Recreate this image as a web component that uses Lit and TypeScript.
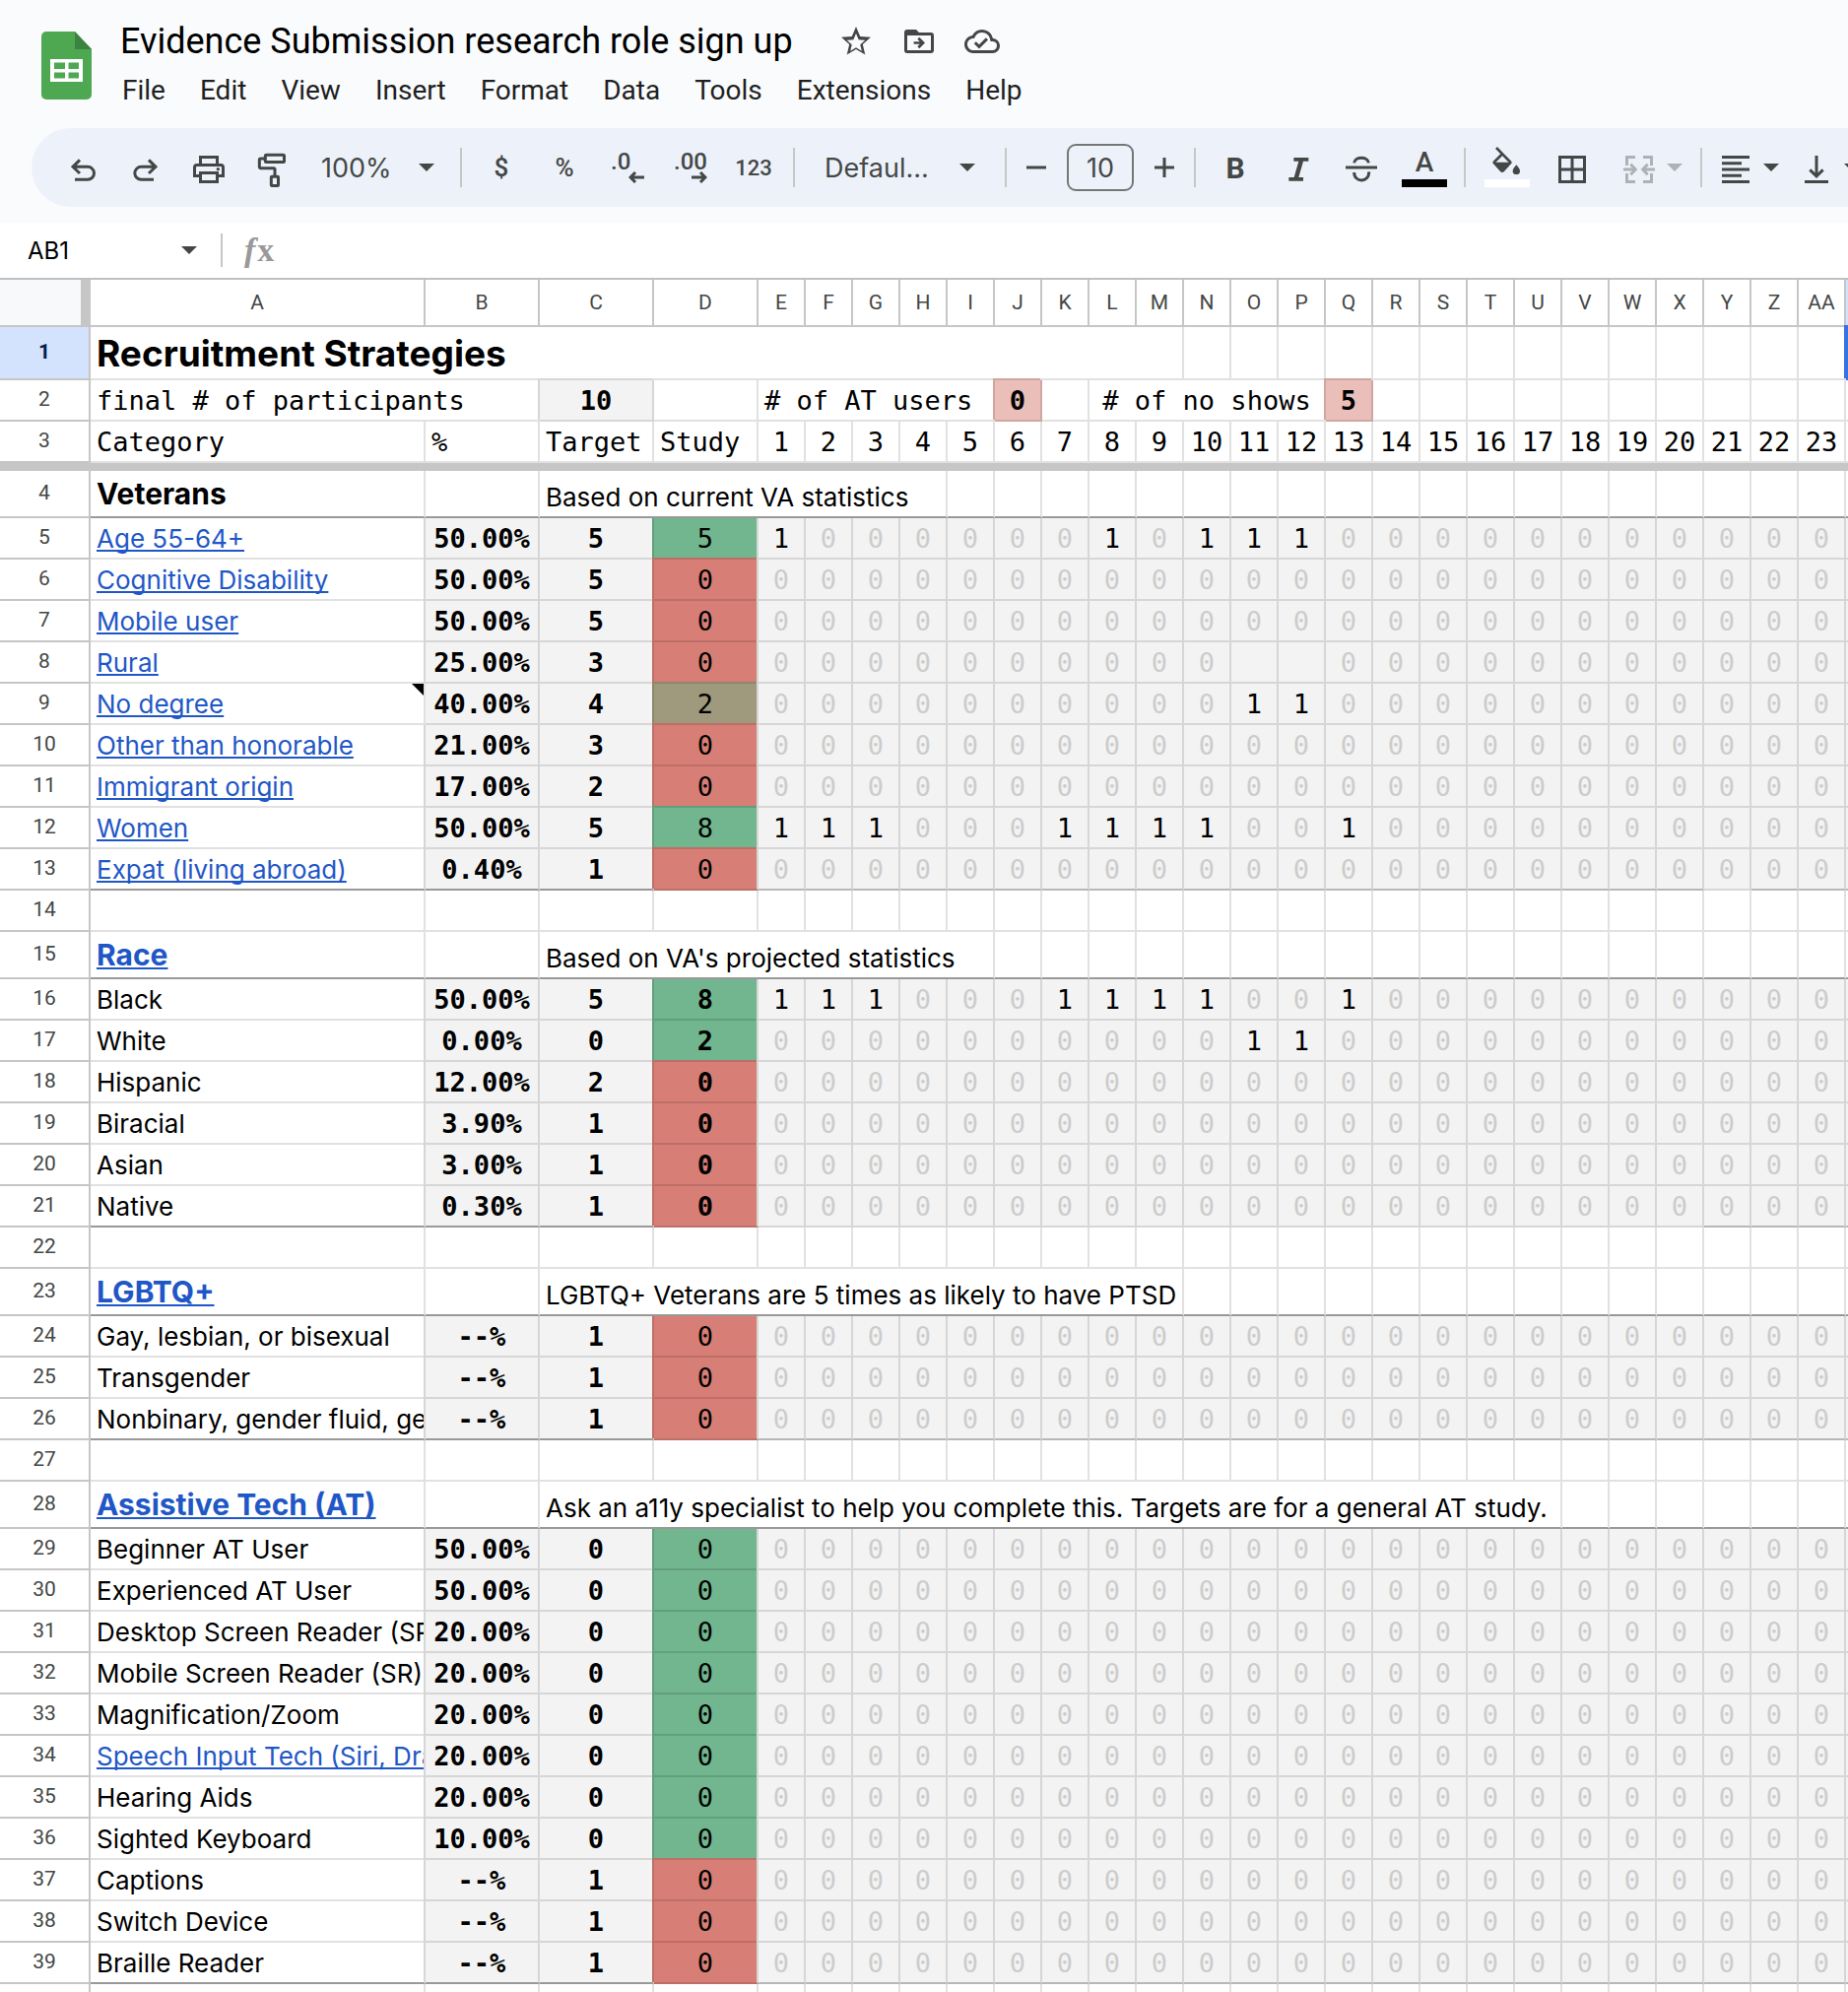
import { LitElement, html, css, svg, nothing, TemplateResult } from "lit";
import { customElement, property } from "lit/decorators.js";
import { classMap } from "lit/directives/class-map.js";

type Tone = "good" | "bad" | "mid";

interface Entry {
  label: string;
  link?: boolean;
  note?: boolean;
  share: string;
  target: number;
  study: number;
  tone: Tone;
  ones?: number[];
  blanks?: number[];
}

interface Group {
  title: string;
  link?: boolean;
  caption: string;
  captionSpan: number;
  boldStudy?: boolean;
  /** Participant numbers whose last cell carries the closing rule. */
  closed: (n: number) => boolean;
  entries: Entry[];
}

const PARTICIPANTS = Array.from({ length: 23 }, (_, i) => i + 1);
const COLUMNS = ["A", "B", "C", "D", ..."EFGHIJKLMNOPQRSTUVWXYZ".split(""), "AA", "AB"];

const GROUPS: Group[] = [
  {
    title: "Veterans",
    caption: "Based on current VA statistics",
    captionSpan: 6,
    closed: (n) => n !== 21,
    entries: [
      { label: "Age 55-64+", link: true, share: "50.00%", target: 5, study: 5, tone: "good", ones: [1, 8, 10, 11, 12] },
      { label: "Cognitive Disability", link: true, share: "50.00%", target: 5, study: 0, tone: "bad" },
      { label: "Mobile user", link: true, share: "50.00%", target: 5, study: 0, tone: "bad" },
      { label: "Rural", link: true, share: "25.00%", target: 3, study: 0, tone: "bad", blanks: [11, 12] },
      { label: "No degree", link: true, note: true, share: "40.00%", target: 4, study: 2, tone: "mid", ones: [11, 12] },
      { label: "Other than honorable", link: true, share: "21.00%", target: 3, study: 0, tone: "bad" },
      { label: "Immigrant origin", link: true, share: "17.00%", target: 2, study: 0, tone: "bad" },
      { label: "Women", link: true, share: "50.00%", target: 5, study: 8, tone: "good", ones: [1, 2, 3, 7, 8, 9, 10, 13] },
      { label: "Expat (living abroad)", link: true, share: "0.40%", target: 1, study: 0, tone: "bad" },
    ],
  },
  {
    title: "Race",
    link: true,
    caption: "Based on VA's projected statistics",
    captionSpan: 7,
    boldStudy: true,
    closed: (n) => n >= 21,
    entries: [
      { label: "Black", share: "50.00%", target: 5, study: 8, tone: "good", ones: [1, 2, 3, 7, 8, 9, 10, 13] },
      { label: "White", share: "0.00%", target: 0, study: 2, tone: "good", ones: [11, 12] },
      { label: "Hispanic", share: "12.00%", target: 2, study: 0, tone: "bad" },
      { label: "Biracial", share: "3.90%", target: 1, study: 0, tone: "bad" },
      { label: "Asian", share: "3.00%", target: 1, study: 0, tone: "bad" },
      { label: "Native", share: "0.30%", target: 1, study: 0, tone: "bad" },
    ],
  },
  {
    title: "LGBTQ+",
    link: true,
    caption: "LGBTQ+ Veterans are 5 times as likely to have PTSD",
    captionSpan: 11,
    closed: () => true,
    entries: [
      { label: "Gay, lesbian, or bisexual", share: "--%", target: 1, study: 0, tone: "bad" },
      { label: "Transgender", share: "--%", target: 1, study: 0, tone: "bad" },
      { label: "Nonbinary, gender fluid, ge", share: "--%", target: 1, study: 0, tone: "bad" },
    ],
  },
  {
    title: "Assistive Tech (AT)",
    link: true,
    caption: "Ask an a11y specialist to help you complete this. Targets are for a general AT study.",
    captionSpan: 19,
    closed: () => true,
    entries: [
      { label: "Beginner AT User", share: "50.00%", target: 0, study: 0, tone: "good" },
      { label: "Experienced AT User", share: "50.00%", target: 0, study: 0, tone: "good" },
      { label: "Desktop Screen Reader (SR", share: "20.00%", target: 0, study: 0, tone: "good" },
      { label: "Mobile Screen Reader (SR)", share: "20.00%", target: 0, study: 0, tone: "good" },
      { label: "Magnification/Zoom", share: "20.00%", target: 0, study: 0, tone: "good" },
      { label: "Speech Input Tech (Siri, Dra", link: true, share: "20.00%", target: 0, study: 0, tone: "good" },
      { label: "Hearing Aids", share: "20.00%", target: 0, study: 0, tone: "good" },
      { label: "Sighted Keyboard", share: "10.00%", target: 0, study: 0, tone: "good" },
      { label: "Captions", share: "--%", target: 1, study: 0, tone: "bad" },
      { label: "Switch Device", share: "--%", target: 1, study: 0, tone: "bad" },
      { label: "Braille Reader", share: "--%", target: 1, study: 0, tone: "bad" },
    ],
  },
];

const ICONS: Record<string, { box: string; art: TemplateResult }> = {
  undo: { box: "18 66 108 108", art: svg`<path d="M63 97 42 118 63 138M42 118H87a19.500 19.500 0 0 1 0 39H48"/>` },
  redo: { box: "210 66 108 108", art: svg`<path d="M273 97 294 118 273 138M294 118H250a19.500 19.500 0 0 0 0 39H288"/>` },
  print: {
    box: "402 66 108 108",
    art: svg`<path d="M430.500 111V88.500H481.500V111M430.500 145.500H412.500V120q0-7.500 7.500-7.500H492q7.500 0 7.500 7.500V145.500H481.500M430.500 136.500H481.500V163.500H430.500Z"/><circle class="solid" cx="484" cy="125" r="5"/>`,
  },
  paint: {
    box: "588 66 108 108",
    art: svg`<rect x="622" y="82" width="57.500" height="21.500" rx="3"/><path d="M620 93H608q-4 0-4 4V118q0 4 4 4H647q4 0 4 4V146"/><rect x="640" y="148" width="21.500" height="27.500" rx="2"/>`,
  },
  borders: { box: "291 66 108 108", art: svg`<path d="M307.500 88.500H382.500V163.500H307.500ZM345 88V164M307 126H383"/>` },
  merge: {
    box: "492 66 108 108",
    art: svg`<path d="M534 88.500H508.500V114M508.500 138V163.500H534M558 88.500H583.500V114M583.500 138V163.500H558M498 126H532M520 110 535 126 520 142M594 126H560M572 110 557 126 572 142"/>`,
  },
  align: { box: "786 66 108 108", art: svg`<path d="M798 88.500H882M798 107H858M798 126H882M798 144.500H858M798 163.500H882"/>` },
  valign: { box: "1032 66 108 108", art: svg`<path d="M1086 84V147M1066 127 1086 147 1106 127M1050 163.500H1122"/>` },
  italic: { box: "0 0 108 108", art: svg`<path class="solid" d="M40 24H85V35H69L55 84H69V95H25V84H41L55 35H40Z"/>` },
  strike: {
    box: "0 0 108 108",
    art: svg`<path d="M6 54H102M32 40C34 20 74 20 76 40M32 69C32 101 78 101 77 67"/>`,
  },
  star: { box: "0 0 24 24", art: svg`<path class="solid" d="m12 6.700 1.250 2.950.5 1.180 1.280.11 3.190.28-2.420 2.100-.97.840.29 1.250.73 3.130-2.750-1.660L12 16.210l-1.100.67-2.750 1.660.73-3.130.29-1.250-.97-.84-2.420-2.100 3.190-.28 1.280-.11.5-1.180zM12 2 9.190 8.630 2 9.240l5.460 4.730L5.820 21 12 17.270 18.180 21l-1.640-7.030L22 9.240l-7.190-.61z"/>` },
  folder: { box: "0 0 24 24", art: svg`<path class="solid" fill-rule="evenodd" d="M20 6h-8l-2-2H4a2 2 0 0 0-2 2v12a2 2 0 0 0 2 2h16a2 2 0 0 0 2-2V8a2 2 0 0 0-2-2zm0 12H4V8h16zM12.200 9.200 16 13l-3.800 3.800-1.300-1.300 1.600-1.600H8.400v-1.800h4.100l-1.600-1.600z"/>` },
  cloud: { box: "0 0 24 24", art: svg`<path class="solid" d="M19.350 10.040A7.490 7.490 0 0 0 12 4 7.490 7.490 0 0 0 5.350 8.040 5.990 5.990 0 0 0 0 14c0 3.310 2.690 6 6 6h13c2.760 0 5-2.240 5-5 0-2.640-2.050-4.780-4.650-4.960zM19 18H6c-2.210 0-4-1.790-4-4 0-2.050 1.530-3.760 3.560-3.970l1.070-.11.5-.95A5.470 5.470 0 0 1 12 6c2.620 0 4.880 1.860 5.390 4.430l.3 1.500 1.530.11A2.980 2.980 0 0 1 22 15c0 1.650-1.350 3-3 3zm-9-3.820-2.090-2.090L6.500 13.500 10 17l6.010-6.010-1.410-1.410z"/>` },
};

@customElement("sheet-icon")
export class SheetIcon extends LitElement {
  @property() name = "";
  static styles = css`
    :host { display: inline-flex; }
    svg { width: 36px; height: 36px; overflow: visible; fill: none; stroke: currentColor; stroke-width: 9; }
    .solid { fill: currentColor; stroke: none; }
  `;
  render() {
    const icon = ICONS[this.name];
    return icon ? html`<svg viewBox=${icon.box} aria-hidden="true">${icon.art}</svg>` : nothing;
  }
}

@customElement("sheet-header")
export class SheetHeader extends LitElement {
  static styles = css`
    :host { display: block; font-family: Roboto, sans-serif; color: #1f1f1f; }
    .head { display: flex; height: 130px; box-sizing: border-box; padding: 20px 0 0 42px; gap: 29px; }
    .logo { width: 51px; height: 69px; margin-top: 12px; flex: none; }
    .title-row { display: flex; align-items: center; height: 44px; gap: 46px; }
    h1 { margin: 0; font-size: 36px; font-weight: 400; line-height: 44px; color: #000; white-space: nowrap; }
    .marks { display: flex; gap: 28px; }
    button { border: 0; background: none; padding: 0; margin: 0; font: inherit; color: inherit; }
    .marks button { display: flex; color: #444746; }
    nav { display: flex; gap: 35px; margin-top: 8px; padding-left: 2px; font-size: 28px; line-height: 40px; }
  `;
  render() {
    return html`
      <header class="head">
        <svg class="logo" viewBox="0 0 51 69" aria-hidden="true">
          <path fill="#4ea852" d="M5 0H34L51 18V64a5 5 0 0 1-5 5H5a5 5 0 0 1-5-5V5a5 5 0 0 1 5-5z" />
          <path fill="#3b8440" d="M34 0 51 18H34z" />
          <path fill="#fff" fill-rule="evenodd" d="M9 28H42V51H9zM13 31.500V38H24V31.500zM27.500 31.500V38H38V31.500zM13 41.500V47.500H24V41.500zM27.500 41.500V47.500H38V41.500z" />
        </svg>
        <div>
          <div class="title-row">
            <h1>Evidence Submission research role sign up</h1>
            <div class="marks">
              <button aria-label="Star"><sheet-icon name="star"></sheet-icon></button>
              <button aria-label="Move"><sheet-icon name="folder"></sheet-icon></button>
              <button aria-label="Saved to cloud"><sheet-icon name="cloud"></sheet-icon></button>
            </div>
          </div>
          <nav>
            ${["File", "Edit", "View", "Insert", "Format", "Data", "Tools", "Extensions", "Help"].map((m) => html`<button>${m}</button>`)}
          </nav>
        </div>
      </header>
    `;
  }
}

const caret = html`<svg class="caret" viewBox="0 0 16 8" aria-hidden="true"><path fill="currentColor" d="M0 0H16L8 8z" /></svg>`;

@customElement("sheet-toolbar")
export class SheetToolbar extends LitElement {
  static styles = css`
    :host { display: block; padding: 0 0 16px 32px; }
    .bar { display: flex; align-items: center; height: 80px; padding-left: 20px; border-radius: 40px 0 0 40px; background: #edf2fa; color: #444746; font: 26px Roboto, sans-serif; overflow: hidden; }
    button { display: flex; align-items: center; justify-content: center; flex: none; width: 64px; height: 56px; margin: 0; border: 0; padding: 0; background: none; font: inherit; font-weight: 500; color: inherit; }
    .rule { flex: none; width: 2px; height: 40px; margin: 0 8px; background: #c7c7c7; }
    .pick { display: grid; flex: none; align-items: center; width: 151px; }
    .pick.wide { width: 197px; }
    .pick > * { grid-area: 1 / 1; }
    .pick .caret { justify-self: end; margin-right: 18px; pointer-events: none; }
    .pick.wide .caret { margin-right: 22px; }
    select { appearance: none; width: 100%; height: 56px; border: 0; margin: 0; padding: 0 0 0 18px; background: none; color: inherit; font: 27px Inter, sans-serif; }
    .wide select { padding-left: 22px; }
    .caret { width: 16px; height: 8px; flex: none; }
    .small { font-size: 22px; }
    .places { display: grid; width: 34px; text-align: left; font-size: 24px; line-height: 20px; }
    .places svg { width: 16px; height: 12px; justify-self: end; fill: none; stroke: currentColor; stroke-width: 3; }
    .step { width: 44px; }
    .step svg { width: 20px; height: 20px; stroke: currentColor; stroke-width: 3; }
    input { box-sizing: border-box; width: 68px; height: 48px; margin: 0 9px; padding: 0; border: 2px solid #747775; border-radius: 9px; background: none; text-align: center; color: inherit; font: 27px Inter, sans-serif; flex: none; }
    .bold { font-size: 30px; font-weight: 700; }
    .ink { flex-direction: column; justify-content: flex-start; height: 44px; font-size: 28px; line-height: 34px; }
    .swatch { width: 46px; height: 8px; background: #000; }
    .fill { width: 68px; }
    .fill svg { width: 46px; height: 44px; overflow: visible; fill: none; stroke: currentColor; stroke-width: 8; }
    .split { width: auto; gap: 10px; padding: 0 8px; }
    .merge { padding: 0 10px 0 18px; color: #aeb1b5; }
    .last { padding-left: 12px; }
  `;
  render() {
    return html`
      <div class="bar" role="toolbar">
        ${["undo", "redo", "print", "paint"].map((n) => html`<button aria-label=${n}><sheet-icon name=${n}></sheet-icon></button>`)}
        <div class="pick"><select aria-label="Zoom"><option>100%</option></select>${caret}</div>
        <span class="rule"></span>
        <button>$</button>
        <button>%</button>
        <button aria-label="Decrease decimal places">
          <span class="places">.0<svg viewBox="0 0 16 12"><path d="M16 6H2M7 1 2 6l5 5" /></svg></span>
        </button>
        <button aria-label="Increase decimal places">
          <span class="places">.00<svg viewBox="0 0 16 12"><path d="M0 6H14M9 1l5 5-5 5" /></svg></span>
        </button>
        <button class="small">123</button>
        <span class="rule"></span>
        <div class="pick wide"><select aria-label="Font"><option>Defaul...</option></select>${caret}</div>
        <span class="rule"></span>
        <button class="step" aria-label="Decrease font size"><svg viewBox="0 0 20 20"><path d="M0 10H20" /></svg></button>
        <input aria-label="Font size" value="10" />
        <button class="step" aria-label="Increase font size"><svg viewBox="0 0 20 20"><path d="M0 10H20M10 0V20" /></svg></button>
        <span class="rule"></span>
        <button class="bold">B</button>
        <button aria-label="Italic"><sheet-icon name="italic"></sheet-icon></button>
        <button aria-label="Strikethrough"><sheet-icon name="strike"></sheet-icon></button>
        <button class="ink">A<span class="swatch"></span></button>
        <span class="rule"></span>
        <button class="fill" aria-label="Fill color">
          <svg viewBox="75 54 138 132">
            <path d="M111 60 155 105M130 78 103 105" />
            <path fill="currentColor" stroke="none" d="M98 104H160L135 132q-6 6-12 0z" />
            <path fill="currentColor" stroke="none" d="M172 112q11 12 11 19a11 10 0 0 1-22 0q0-7 11-19z" />
            <path fill="#fff" stroke="none" d="M75 156H213V180H75z" />
          </svg>
        </button>
        <button aria-label="Borders"><sheet-icon name="borders"></sheet-icon></button>
        <button class="split merge" aria-label="Merge cells"><sheet-icon name="merge"></sheet-icon>${caret}</button>
        <span class="rule"></span>
        <button class="split" aria-label="Horizontal align"><sheet-icon name="align"></sheet-icon>${caret}</button>
        <button class="split last" aria-label="Vertical align"><sheet-icon name="valign"></sheet-icon>${caret}</button>
      </div>
    `;
  }
}

@customElement("formula-bar")
export class FormulaBar extends LitElement {
  static styles = css`
    :host { display: flex; align-items: center; height: 56px; padding-left: 28px; background: #fff; border-bottom: 2px solid #c0c0c0; }
    input { border: 0; margin: 0; padding: 0; background: none; outline: 0; min-width: 0; font: 24px Inter, sans-serif; color: #000; }
    .name { width: 156px; }
    .entry { flex: 1; }
    button { display: flex; border: 0; margin: 0; padding: 0; background: none; color: #444746; }
    .caret { width: 16px; height: 8px; }
    .rule { width: 2px; height: 34px; margin: 0 22px 0 24px; background: #c7c7c7; }
    .fx { display: flex; align-items: center; margin-right: 16px; color: #999; font: 34px/40px "Liberation Serif", serif; }
    .fx i { padding-right: 2px; font-weight: 700; }
  `;
  render() {
    return html`
      <input class="name" aria-label="Name box" value="AB1" />
      <button aria-label="Named ranges">${caret}</button>
      <span class="rule"></span>
      <span class="fx"><i>f</i><b>x</b></span>
      <input class="entry" aria-label="Formula" />
    `;
  }
}

@customElement("sheet-grid")
export class SheetGrid extends LitElement {
  static styles = css`
    :host { display: block; flex: 1; min-height: 0; overflow: hidden; background: #fff; }
    table { table-layout: fixed; width: 0; border-collapse: separate; border-spacing: 0; font: 26px/34px Inter, sans-serif; color: #000; }
    .w-num { width: 92px; } .w-a { width: 340px; } .w-b { width: 116px; } .w-d { width: 106px; } .w-n { width: 48px; }
    th, td { box-sizing: border-box; height: 42px; padding: 0; border: 0 solid #e1e1e1; border-width: 0 2px 2px 0; white-space: nowrap; overflow: hidden; text-align: left; font-weight: 400; vertical-align: middle; }
    td { padding: 2px 0 0 6px; }
    th { border-color: #c6c6c6; background: #fff; color: #444746; text-align: center; font: 21px/24px Roboto, sans-serif; }
    thead th { height: 48px; }
    tbody th { padding-bottom: 2px; }
    .corner { border-right-width: 10px; background: #f8f9fa; }
    .active { background: #d3e3fd; }
    tbody .active { color: #041e49; font-weight: 700; }
    .first > * { height: 54px; }
    .first td { font-size: 37px; font-weight: 700; }
    .freeze td { height: 8px; padding: 0; border: 0; background: #c6c6c6; }
    .selected { box-shadow: -2px -2px #3871e0; border: 2px solid #3871e0; }
    .mono { font-family: "DejaVu Sans Mono", monospace; font-size: 27px; }
    .mid-text { padding-left: 0; text-align: center; }
    .strong { font-weight: 700; }
    .shade { background: #f3f3f3; box-shadow: -2px -2px #d6d6d6; border-color: #d6d6d6; }
    .pink { background: #eabfba; border-color: #d0a6a2; box-shadow: -2px -2px #d0a6a2; }
    .good { background: #71b68f; box-shadow: -2px -2px #639f7d; border-color: #d6d6d6; border-bottom-color: #639f7d; }
    .bad { background: #d77f76; box-shadow: -2px -2px #bd6f67; border-color: #d6d6d6; border-bottom-color: #bd6f67; }
    .mid { background: #9f997d; box-shadow: -2px -2px #8c876e; border-color: #d6d6d6; border-bottom-color: #8c876e; }
    .opening .shade { box-shadow: -2px 0 #d6d6d6; }
    .opening .good { box-shadow: -2px 0 #639f7d; }
    .opening .bad { box-shadow: -2px 0 #bd6f67; }
    .zero { color: #ccc; }
    .group > * { height: 48px; }
    .group td { border-bottom-color: #999; }
    .group .name { padding-top: 0; font-size: 30px; font-weight: 700; }
    .group .caption { padding-top: 8px; }
    .end-dark { border-bottom-color: #999; }
    .end-soft { border-bottom-color: #b7b7b7; }
    a { color: #1f57c6; text-decoration: underline; text-decoration-thickness: 2px; text-underline-offset: 2px; text-decoration-skip-ink: none; }
    .noted { position: relative; }
    .noted::after { content: ""; position: absolute; top: 0; right: 0; border: 6px solid; border-color: #000 #000 transparent transparent; }
  `;

  private blanks(count: number) {
    return Array.from({ length: count }, () => html`<td></td>`);
  }

  private text(label: string, link?: boolean) {
    return link ? html`<a href="#">${label}</a>` : label;
  }

  private entryRow(e: Entry, row: number, g: Group, i: number) {
    const last = i === g.entries.length - 1;
    return html`<tr class=${i === 0 ? "opening" : ""}>
      <th scope="row">${row}</th>
      <td class=${classMap({ noted: !!e.note, "end-dark": last })}>${this.text(e.label, e.link)}</td>
      <td class=${classMap({ mono: true, "mid-text": true, strong: true, shade: true, "end-dark": last })}>${e.share}</td>
      <td class=${classMap({ mono: true, "mid-text": true, strong: true, shade: true, "end-dark": last })}>${e.target}</td>
      <td class=${classMap({ mono: true, "mid-text": true, strong: !!g.boldStudy, [e.tone]: true })}>${e.study}</td>
      ${PARTICIPANTS.map((n) => {
        const one = !!e.ones?.includes(n);
        return html`<td class=${classMap({ mono: true, "mid-text": true, shade: true, zero: !one, "end-soft": last && g.closed(n) })}>${e.blanks?.includes(n) ? "" : one ? 1 : 0}</td>`;
      })}
      <td class=${classMap({ shade: true, "end-soft": last })}></td>
    </tr>`;
  }

  private body() {
    let row = 3;
    return GROUPS.map((g) => html`
      <tr class="group">
        <th scope="row">${++row}</th>
        <td class="name">${this.text(g.title, g.link)}</td>
        <td></td>
        <td class="caption" colspan=${g.captionSpan}>${g.caption}</td>
        ${this.blanks(26 - g.captionSpan)}
      </tr>
      ${g.entries.map((e, i) => this.entryRow(e, ++row, g, i))}
      <tr><th scope="row">${++row}</th>${this.blanks(28)}</tr>
    `);
  }

  render() {
    return html`<table>
      <colgroup>
        <col class="w-num" /><col class="w-a" /><col class="w-b" /><col class="w-b" /><col class="w-d" />
        ${PARTICIPANTS.map(() => html`<col class="w-n" />`)}<col class="w-n" />
      </colgroup>
      <thead>
        <tr>
          <th class="corner"></th>
          ${COLUMNS.map((c) => html`<th scope="col" class=${c === "AB" ? "active" : ""}>${c === "AB" ? "" : c}</th>`)}
        </tr>
      </thead>
      <tbody>
        <tr class="first">
          <th scope="row" class="active">1</th>
          <td colspan="13">Recruitment Strategies</td>
          ${this.blanks(14)}
          <td class="selected"></td>
        </tr>
        <tr class="mono">
          <th scope="row">2</th>
          <td colspan="2">final # of participants</td>
          <td class="mid-text strong shade">10</td>
          <td></td>
          <td colspan="5"># of AT users</td>
          <td class="mid-text strong pink">0</td>
          <td></td>
          <td class="mid-text" colspan="5"># of no shows</td>
          <td class="mid-text strong pink">5</td>
          ${this.blanks(11)}
        </tr>
        <tr class="mono">
          <th scope="row">3</th>
          <td>Category</td>
          <td>%</td>
          <td>Target</td>
          <td>Study</td>
          ${PARTICIPANTS.map((n) => html`<td class="mid-text">${n}</td>`)}
          <td></td>
        </tr>
        <tr class="freeze" aria-hidden="true"><td colspan="29"></td></tr>
        ${this.body()}
      </tbody>
    </table>`;
  }
}

@customElement("app-root")
export class AppRoot extends LitElement {
  static styles = css`
    :host { display: flex; flex-direction: column; height: 100vh; overflow: hidden; background: #f9fbfd; }
  `;
  render() {
    return html`
      <sheet-header></sheet-header>
      <sheet-toolbar></sheet-toolbar>
      <formula-bar></formula-bar>
      <sheet-grid></sheet-grid>
    `;
  }
}
